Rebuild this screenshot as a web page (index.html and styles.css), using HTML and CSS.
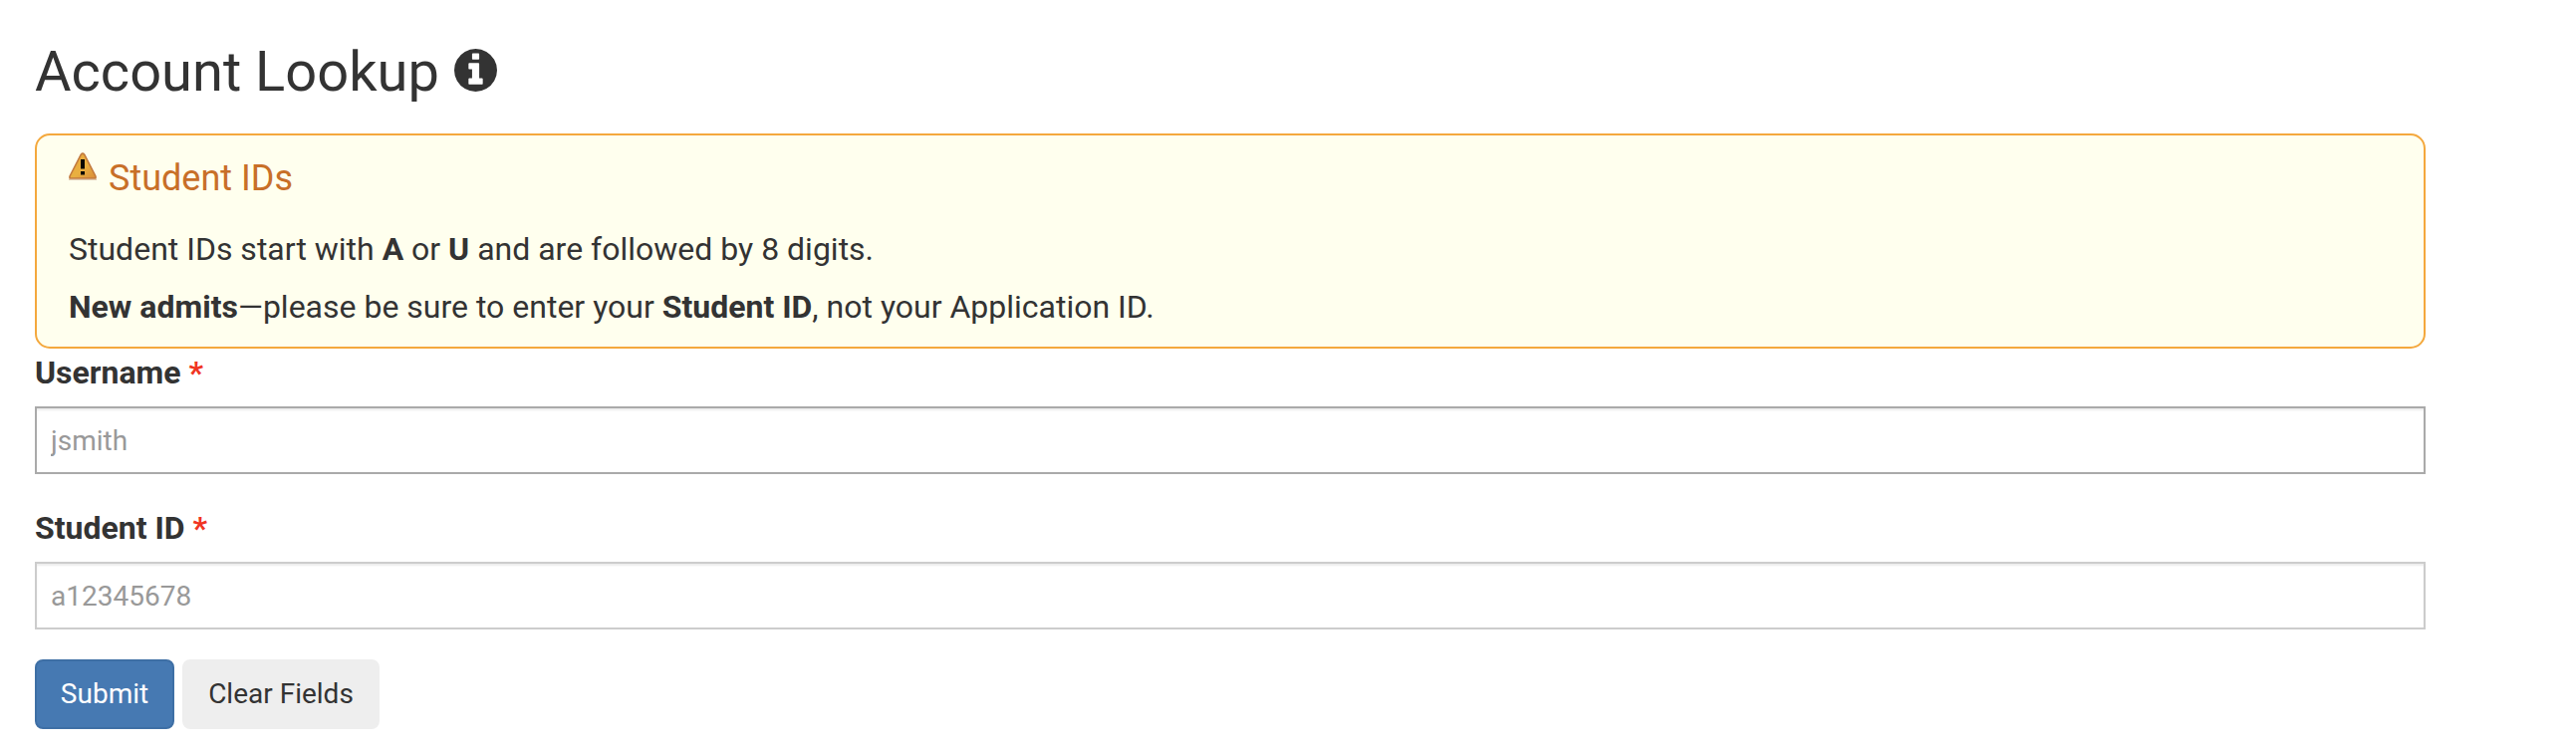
FILE: index.html
```html
<!DOCTYPE html>
<html lang="en">
<head>
<meta charset="utf-8">
<title>Account Lookup</title>
<link rel="stylesheet" href="styles.css">
</head>
<body>
<main class="page">
  <h1 class="heading"><span>Account Lookup</span><svg class="info" viewBox="128 128 1536 1536"><path d="M1152 1376v-160q0-14-9-23t-23-9h-96v-512q0-14-9-23t-23-9h-320q-14 0-23 9t-9 23v160q0 14 9 23t23 9h96v320h-96q-14 0-23 9t-9 23v160q0 14 9 23t23 9h448q14 0 23-9t9-23zm-128-896v-160q0-14-9-23t-23-9h-192q-14 0-23 9t-9 23v160q0 14 9 23t23 9h192q14 0 23-9t9-23zm640 416q0 209-103 385.5t-279.5 279.5-385.5 103-385.5-103-279.5-279.5-103-385.5 103-385.5 279.5-279.5 385.5-103 385.5 103 279.5 279.5 103 385.5z"/></svg></h1>
  <section class="alert">
    <h2 class="alert-title"><svg class="warn" viewBox="0 0 28 28"><defs><linearGradient id="amber" x1="0" y1="0" x2="1" y2="1"><stop offset="0" stop-color="#e8a63c"/><stop offset=".55" stop-color="#e9b040"/><stop offset="1" stop-color="#d98c38"/></linearGradient></defs><path d="M0 27.4h28" stroke="#c9a58a" stroke-width="1.2" opacity=".6"/><path d="M12.3 2.2Q14 0 15.700 2.200L27 24v2H1v-2z" fill="url(#amber)" stroke="#c27a3e" stroke-width="1.600" stroke-linejoin="round"/><path d="M12 7h4v9.500h-4zM12 19h4v3.500h-4z" fill="#080704"/></svg><span>Student IDs</span></h2>
    <p class="alert-text">Student IDs start with <b>A</b> or <b>U</b> and are followed by 8 digits.</p>
    <p class="alert-text"><b>New admits</b>—please be sure to enter your <b>Student ID</b>, not your Application ID.</p>
  </section>
  <form class="form">
    <label class="label" for="username">Username <span class="required">*</span></label>
    <input class="input input-active" id="username" type="text" placeholder="jsmith">
    <label class="label" for="student-id">Student ID <span class="required">*</span></label>
    <input class="input" id="student-id" type="text" placeholder="a12345678">
    <div class="actions">
      <button class="button button-primary" type="button">Submit</button>
      <button class="button" type="button">Clear Fields</button>
    </div>
  </form>
</main>
</body>
</html>
```
FILE: styles.css
```css
* { box-sizing: border-box; }
body {
  margin: 0;
  background: #fff;
  color: #333;
  font-family: Roboto, "Liberation Sans", sans-serif;
}
.page { width: 2435px; padding: 40px 0 0 35px; }
.heading {
  display: flex;
  align-items: flex-start;
  gap: 15px;
  margin: 0 0 30px;
  font-size: 56px;
  font-weight: 400;
  line-height: 64px;
}
.info { width: 43px; height: 43px; margin-top: 9px; fill: #333; }
.alert {
  padding: 15px 32px 11px;
  border: 2px solid #f4a83d;
  border-radius: 15px;
  background: #ffffee;
}
.alert-title {
  display: flex;
  align-items: flex-start;
  gap: 12px;
  margin: 0 0 22px;
  color: #c86f28;
  font-size: 36px;
  font-weight: 400;
  line-height: 40px;
}
.alert-title span { margin-top: 8px; }
.warn { width: 28px; height: 28px; margin-top: 2px; }
.alert-text { margin: 0; font-size: 32px; line-height: 58px; }
.label {
  display: block;
  margin: 8px 0 18px;
  font-size: 32px;
  font-weight: 700;
  line-height: 32px;
}
.required { color: #f03422; }
.input {
  display: block;
  width: 100%;
  height: 68px;
  padding: 0 14px;
  border: 2px solid #ccc;
  border-radius: 0;
  outline: 0;
  background: #fff;
  box-shadow: inset 0 2px 2px rgba(0, 0, 0, .075);
  color: #333;
  font: 28px/40px Roboto, "Liberation Sans", sans-serif;
}
.input-active { border-color: #aaa; }
.input::placeholder { color: #999; opacity: 1; }
.input + .label { margin-top: 38px; }
.actions { display: flex; gap: 8px; margin-top: 30px; }
.button {
  width: 198px;
  height: 70px;
  padding: 0 0 1px;
  border: 2px solid #eee;
  border-radius: 8px;
  background: #eee;
  color: #333;
  font: 28px/40px Roboto, "Liberation Sans", sans-serif;
}
.button-primary {
  width: 140px;
  border-color: #3e6fa5;
  background: #4679b2;
  color: #fff;
}
```
